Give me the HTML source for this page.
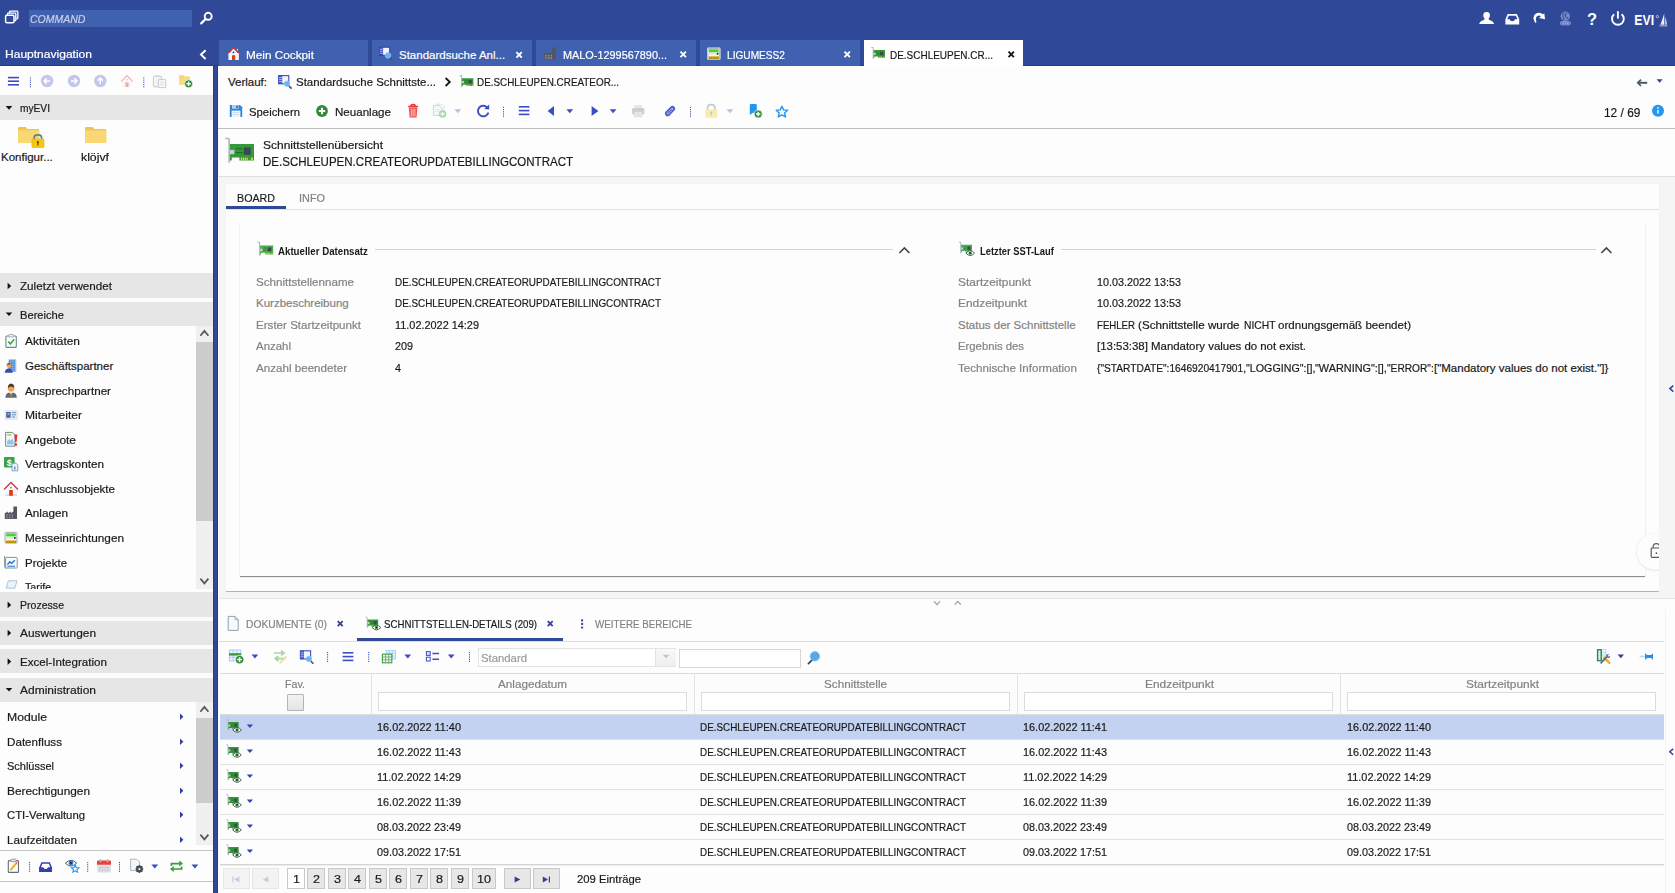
<!DOCTYPE html><html><head><meta charset="utf-8"><title>EVI</title><style>
html,body{margin:0;padding:0}body{width:1675px;height:893px;position:relative;overflow:hidden;background:#fff;font-family:"Liberation Sans",sans-serif;font-size:12px;color:#1a1a1a}
body>div,body>svg,body>span{position:absolute;display:block}body>span{white-space:nowrap;line-height:16px;height:16px;transform-origin:0 50%;-webkit-text-stroke:0.2px}
</style></head><body>
<div style="left:0px;top:0px;width:1675px;height:66px;background:#2f4898;"></div>
<div style="left:0px;top:65px;width:1675px;height:1px;background:#223c94;"></div>
<div style="left:29px;top:10px;width:163px;height:17px;background:#4060b0;"></div>
<span id="t0" style="left:30.3px;top:11px;font-size:11.5px;color:#c9d1ec;font-style:italic;transform:scaleX(0.9126);">COMMAND</span>
<span id="t1" style="left:5px;top:46px;font-size:11.5px;color:#ffffff;transform:scaleX(1.0466);">Hauptnavigation</span>
<div style="left:219px;top:40px;width:149px;height:26px;background:#4060b0;"></div>
<span id="t2" style="left:246px;top:47px;font-size:11.5px;color:#ffffff;transform:scaleX(1.0230);">Mein Cockpit</span>
<div style="left:372px;top:40px;width:160px;height:26px;background:#4060b0;"></div>
<span id="t3" style="left:399px;top:47px;font-size:11.5px;color:#ffffff;">Standardsuche Anl...</span>
<div style="left:536px;top:40px;width:160px;height:26px;background:#4060b0;"></div>
<span id="t4" style="left:563px;top:47px;font-size:11.5px;color:#ffffff;transform:scaleX(0.9457);">MALO-1299567890...</span>
<div style="left:700px;top:40px;width:160px;height:26px;background:#4060b0;"></div>
<span id="t5" style="left:727px;top:47px;font-size:11.5px;color:#ffffff;transform:scaleX(0.8811);">LIGUMESS2</span>
<div style="left:864px;top:40px;width:159px;height:26px;background:#ffffff;"></div>
<span id="t6" style="left:890px;top:47px;font-size:11.5px;color:#1a1a1a;transform:scaleX(0.8666);">DE.SCHLEUPEN.CR...</span>
<div style="left:0px;top:66px;width:213px;height:827px;background:#fdfdfd;"></div>
<div style="left:218px;top:66px;width:1457px;height:111px;background:#fdfdfd;"></div>
<div style="left:213px;top:66px;width:5px;height:827px;background:#2f4898;"></div>
<div style="left:213px;top:66px;width:1px;height:827px;background:#223c94;"></div>
<div style="left:217px;top:66px;width:1px;height:827px;background:#223c94;"></div>
<div style="left:0px;top:95px;width:213px;height:25px;background:#e6e6e6;"></div>
<span id="t7" style="left:20px;top:100px;font-size:11.5px;color:#1a1a1a;transform:scaleX(0.8856);">myEVI</span>
<span id="t8" style="left:1px;top:149px;font-size:11.5px;color:#1a1a1a;">Konfigur...</span>
<span id="t9" style="left:81px;top:149px;font-size:11.5px;color:#1a1a1a;transform:scaleX(1.0686);">klöjvf</span>
<div style="left:0px;top:273px;width:213px;height:25px;background:#e6e6e6;"></div>
<span id="t10" style="left:20px;top:278px;font-size:11.5px;color:#1a1a1a;transform:scaleX(1.0136);">Zuletzt verwendet</span>
<div style="left:0px;top:298px;width:213px;height:4px;background:#fbfbfb;"></div>
<div style="left:0px;top:302px;width:213px;height:24px;background:#e6e6e6;"></div>
<span id="t11" style="left:20px;top:307px;font-size:11.5px;color:#1a1a1a;transform:scaleX(0.9694);">Bereiche</span>
<div style="left:196px;top:326px;width:17px;height:263px;background:#f0f0f0;"></div>
<div style="left:196px;top:342px;width:17px;height:179px;background:#cccccc;"></div>
<span id="t12" style="left:25px;top:333px;font-size:11.5px;color:#1a1a1a;transform:scaleX(1.0365);">Aktivitäten</span>
<span id="t13" style="left:25px;top:358px;font-size:11.5px;color:#1a1a1a;">Geschäftspartner</span>
<span id="t14" style="left:25px;top:383px;font-size:11.5px;color:#1a1a1a;transform:scaleX(1.0114);">Ansprechpartner</span>
<span id="t15" style="left:25px;top:407px;font-size:11.5px;color:#1a1a1a;transform:scaleX(1.0492);">Mitarbeiter</span>
<span id="t16" style="left:25px;top:432px;font-size:11.5px;color:#1a1a1a;transform:scaleX(1.0355);">Angebote</span>
<span id="t17" style="left:25px;top:456px;font-size:11.5px;color:#1a1a1a;transform:scaleX(1.0212);">Vertragskonten</span>
<span id="t18" style="left:25px;top:481px;font-size:11.5px;color:#1a1a1a;transform:scaleX(1.0056);">Anschlussobjekte</span>
<span id="t19" style="left:25px;top:505px;font-size:11.5px;color:#1a1a1a;transform:scaleX(1.0185);">Anlagen</span>
<span id="t20" style="left:25px;top:530px;font-size:11.5px;color:#1a1a1a;transform:scaleX(1.0256);">Messeinrichtungen</span>
<span id="t21" style="left:25px;top:555px;font-size:11.5px;color:#1a1a1a;transform:scaleX(0.9956);">Projekte</span>
<span id="t22" style="left:25.3px;top:579px;font-size:11.5px;color:#1a1a1a;transform:scaleX(0.9316);">Tarife</span>
<div style="left:0px;top:588.5px;width:196px;height:3.5px;background:#fdfdfd;"></div>
<div style="left:0px;top:592px;width:213px;height:25px;background:#e6e6e6;"></div>
<span id="t23" style="left:20px;top:597px;font-size:11.5px;color:#1a1a1a;transform:scaleX(0.9179);">Prozesse</span>
<div style="left:0px;top:621px;width:213px;height:24px;background:#e6e6e6;"></div>
<span id="t24" style="left:20px;top:625px;font-size:11.5px;color:#1a1a1a;transform:scaleX(1.0336);">Auswertungen</span>
<div style="left:0px;top:649px;width:213px;height:24px;background:#e6e6e6;"></div>
<span id="t25" style="left:20px;top:654px;font-size:11.5px;color:#1a1a1a;transform:scaleX(1.0081);">Excel-Integration</span>
<div style="left:0px;top:678px;width:213px;height:24px;background:#e6e6e6;"></div>
<span id="t26" style="left:20px;top:682px;font-size:11.5px;color:#1a1a1a;transform:scaleX(1.0429);">Administration</span>
<div style="left:0px;top:617px;width:213px;height:4px;background:#fbfbfb;"></div>
<div style="left:0px;top:645px;width:213px;height:4px;background:#fbfbfb;"></div>
<div style="left:0px;top:673px;width:213px;height:4px;background:#fbfbfb;"></div>
<div style="left:196px;top:702px;width:17px;height:143px;background:#f0f0f0;"></div>
<div style="left:196px;top:718px;width:17px;height:85px;background:#cccccc;"></div>
<span id="t27" style="left:7px;top:709px;font-size:11.5px;color:#1a1a1a;transform:scaleX(1.0605);">Module</span>
<span id="t28" style="left:7px;top:734px;font-size:11.5px;color:#1a1a1a;transform:scaleX(1.0121);">Datenfluss</span>
<span id="t29" style="left:7px;top:758px;font-size:11.5px;color:#1a1a1a;transform:scaleX(0.9549);">Schlüssel</span>
<span id="t30" style="left:7px;top:783px;font-size:11.5px;color:#1a1a1a;transform:scaleX(1.0303);">Berechtigungen</span>
<span id="t31" style="left:7px;top:807px;font-size:11.5px;color:#1a1a1a;transform:scaleX(0.9840);">CTI-Verwaltung</span>
<span id="t32" style="left:7px;top:832px;font-size:11.5px;color:#1a1a1a;transform:scaleX(1.0136);">Laufzeitdaten</span>
<div style="left:0px;top:850px;width:213px;height:1px;background:#c6c6c6;"></div>
<div style="left:0px;top:881px;width:213px;height:1px;background:#c6c6c6;"></div>
<span id="t33" style="left:228px;top:74px;font-size:11.5px;color:#1a1a1a;">Verlauf:</span>
<span id="t34" style="left:296px;top:74px;font-size:11.5px;color:#1a1a1a;transform:scaleX(0.9954);">Standardsuche Schnittste...</span>
<span id="t35" style="left:477px;top:74px;font-size:11.5px;color:#1a1a1a;transform:scaleX(0.8591);">DE.SCHLEUPEN.CREATEOR...</span>
<span id="t36" style="left:249px;top:104px;font-size:11.5px;color:#1a1a1a;transform:scaleX(0.9846);">Speichern</span>
<span id="t37" style="left:335px;top:104px;font-size:11.5px;color:#1a1a1a;transform:scaleX(1.0065);">Neuanlage</span>
<span id="t38" style="left:1603.6px;top:105.4px;font-size:12.5px;color:#1a1a1a;transform:scaleX(0.9520);">12 / 69</span>
<div style="left:218px;top:128px;width:1457px;height:1px;background:#bdbdbd;"></div>
<span id="t39" style="left:263px;top:137px;font-size:11.5px;color:#1a1a1a;transform:scaleX(1.0429);">Schnittstellenübersicht</span>
<span id="t40" style="left:263px;top:153.6px;font-size:12.5px;color:#1a1a1a;transform:scaleX(0.9215);">DE.SCHLEUPEN.CREATEORUPDATEBILLINGCONTRACT</span>
<div style="left:218px;top:176px;width:1457px;height:1px;background:#e0e0e0;"></div>
<div style="left:219px;top:177px;width:1456px;height:422px;background:#f5f5f5;"></div>
<div style="left:226px;top:184px;width:1433px;height:407px;background:#fdfdfd;"></div>
<div style="left:226px;top:591px;width:1433px;height:1px;background:#b4b4b4;"></div>
<span id="t41" style="left:237px;top:190px;font-size:11.5px;color:#1a1a1a;transform:scaleX(0.9290);">BOARD</span>
<span id="t42" style="left:299px;top:190px;font-size:11.5px;color:#848282;transform:scaleX(0.9460);">INFO</span>
<div style="left:226px;top:206px;width:60px;height:3px;background:#2f4898;"></div>
<div style="left:226px;top:209px;width:1433px;height:1px;background:#e2e2e2;"></div>
<div style="left:239px;top:224px;width:1407px;height:353px;background:#f1f1f1;"></div>
<div style="left:240px;top:224px;width:1405px;height:352px;background:#fdfdfd;"></div>
<div style="left:240px;top:576px;width:1405px;height:1px;background:#8e8e8e;"></div>
<div style="left:240px;top:577px;width:1405px;height:1px;background:#eeeeee;"></div>
<span id="t43" style="left:278.2px;top:243.6px;font-size:10.2px;color:#1a1a1a;font-weight:700;-webkit-text-stroke:0;transform:scaleX(0.9507);">Aktueller Datensatz</span>
<div style="left:375px;top:249px;width:518px;height:1px;background:#d4d4d4;"></div>
<span id="t44" style="left:980.1px;top:243.6px;font-size:10.2px;color:#1a1a1a;font-weight:700;-webkit-text-stroke:0;transform:scaleX(0.9193);">Letzter SST-Lauf</span>
<div style="left:1061px;top:249px;width:535px;height:1px;background:#d4d4d4;"></div>
<span id="t45" style="left:256px;top:274px;font-size:11.5px;color:#848282;transform:scaleX(1.0085);">Schnittstellenname</span>
<span id="t46" style="left:395px;top:274px;font-size:11.5px;color:#1a1a1a;transform:scaleX(0.8595);">DE.SCHLEUPEN.CREATEORUPDATEBILLINGCONTRACT</span>
<span id="t47" style="left:256px;top:295px;font-size:11.5px;color:#848282;">Kurzbeschreibung</span>
<span id="t48" style="left:395px;top:295px;font-size:11.5px;color:#1a1a1a;transform:scaleX(0.8595);">DE.SCHLEUPEN.CREATEORUPDATEBILLINGCONTRACT</span>
<span id="t49" style="left:256px;top:317px;font-size:11.5px;color:#848282;transform:scaleX(1.0078);">Erster Startzeitpunkt</span>
<span id="t50" style="left:395px;top:317px;font-size:11.5px;color:#1a1a1a;transform:scaleX(0.9471);">11.02.2022 14:29</span>
<span id="t51" style="left:256px;top:338px;font-size:11.5px;color:#848282;transform:scaleX(0.9951);">Anzahl</span>
<span id="t52" style="left:395px;top:338px;font-size:11.5px;color:#1a1a1a;transform:scaleX(0.9381);">209</span>
<span id="t53" style="left:256px;top:360px;font-size:11.5px;color:#848282;transform:scaleX(1.0094);">Anzahl beendeter</span>
<span id="t54" style="left:395px;top:360px;font-size:11.5px;color:#1a1a1a;transform:scaleX(0.9366);">4</span>
<span id="t55" style="left:958px;top:274px;font-size:11.5px;color:#848282;transform:scaleX(1.0380);">Startzeitpunkt</span>
<span id="t56" style="left:1097px;top:274px;font-size:11.5px;color:#1a1a1a;transform:scaleX(0.9382);">10.03.2022 13:53</span>
<span id="t57" style="left:958px;top:295px;font-size:11.5px;color:#848282;transform:scaleX(1.0376);">Endzeitpunkt</span>
<span id="t58" style="left:1097px;top:295px;font-size:11.5px;color:#1a1a1a;transform:scaleX(0.9382);">10.03.2022 13:53</span>
<span id="t59" style="left:958px;top:317px;font-size:11.5px;color:#848282;">Status der Schnittstelle</span>
<span id="t60" style="left:1097px;top:317px;font-size:11.5px;color:#1a1a1a;transform:scaleX(0.8375);">FEHLER</span>
<span id="t61" style="left:1138.4px;top:317px;font-size:11.5px;color:#1a1a1a;transform:scaleX(1.0124);">(Schnittstelle wurde</span>
<span id="t62" style="left:1243.5px;top:317px;font-size:11.5px;color:#1a1a1a;transform:scaleX(0.8964);">NICHT</span>
<span id="t63" style="left:1278px;top:317px;font-size:11.5px;color:#1a1a1a;transform:scaleX(1.0050);">ordnungsgemäß beendet)</span>
<span id="t64" style="left:958px;top:338px;font-size:11.5px;color:#848282;transform:scaleX(0.9832);">Ergebnis des</span>
<span id="t65" style="left:1097px;top:338px;font-size:11.5px;color:#1a1a1a;transform:scaleX(0.9937);">[13:53:38] Mandatory values do not exist.</span>
<span id="t66" style="left:958px;top:360px;font-size:11.5px;color:#848282;transform:scaleX(1.0062);">Technische Information</span>
<span id="t67" style="left:1097px;top:360px;font-size:11.5px;color:#1a1a1a;transform:scaleX(0.8869);">{&quot;STARTDATE&quot;:1646920417901,</span>
<span id="t68" style="left:1246px;top:360px;font-size:11.5px;color:#1a1a1a;transform:scaleX(0.9300);">&quot;LOGGING&quot;:[],</span>
<span id="t69" style="left:1315.4px;top:360px;font-size:11.5px;color:#1a1a1a;transform:scaleX(0.9447);">&quot;WARNING&quot;:[],</span>
<span id="t70" style="left:1387.3px;top:360px;font-size:11.5px;color:#1a1a1a;transform:scaleX(0.8830);">&quot;ERROR&quot;:</span>
<span id="t71" style="left:1434px;top:360px;font-size:11.5px;color:#1a1a1a;">[&quot;Mandatory values do not exist.&quot;]}</span>
<div style="left:219px;top:598px;width:1456px;height:1px;background:#e6e6e6;"></div>
<div style="left:218px;top:599px;width:1457px;height:294px;background:#fdfdfd;"></div>
<div style="left:1665px;top:609px;width:1px;height:284px;background:#f3f3f3;"></div>
<span id="t72" style="left:246px;top:616px;font-size:11.5px;color:#848282;transform:scaleX(0.8927);">DOKUMENTE (0)</span>
<span id="t73" style="left:384px;top:616px;font-size:11.5px;color:#1a1a1a;transform:scaleX(0.8410);">SCHNITTSTELLEN-DETAILS (209)</span>
<span id="t74" style="left:595px;top:616px;font-size:11.5px;color:#848282;transform:scaleX(0.8480);">WEITERE BEREICHE</span>
<div style="left:219px;top:641px;width:1445px;height:1px;background:#dcdcdc;"></div>
<div style="left:357px;top:638px;width:206px;height:3px;background:#2f4898;"></div>
<div style="left:478px;top:648px;width:198px;height:19px;background:#ffffff;box-shadow:inset 0 0 0 1px #e3e3e3"></div>
<div style="left:655px;top:649px;width:20px;height:17px;background:linear-gradient(#f8f8f8,#eeeeee);border-left:1px solid #e3e3e3"></div>
<span id="t75" style="left:481px;top:650px;font-size:11.5px;color:#9a9a9a;transform:scaleX(0.9853);">Standard</span>
<div style="left:679px;top:649px;width:122px;height:19px;background:#ffffff;box-shadow:inset 0 0 0 1px #d6d6d6"></div>
<div style="left:220px;top:673px;width:1444px;height:1px;background:#dcdcdc;"></div>
<div style="left:220px;top:674px;width:1444px;height:40px;background:#fcfcfc;"></div>
<span id="t76" style="left:285px;top:676px;font-size:11.5px;color:#848282;transform:scaleX(0.9296);">Fav.</span>
<div style="left:287px;top:694px;width:17px;height:17px;background:linear-gradient(#f4f4f4,#e2e2e2);box-shadow:inset 0 0 0 1px #b4b4b4;border-radius:1.5px"></div>
<div style="left:371px;top:673px;width:1px;height:41px;background:#e2e2e2;"></div>
<span id="t77" style="left:498px;top:676px;font-size:11.5px;color:#848282;transform:scaleX(1.0180);">Anlagedatum</span>
<div style="left:378px;top:692px;width:309px;height:19px;background:#ffffff;box-shadow:inset 0 0 0 1px #dcdcdc"></div>
<div style="left:694px;top:673px;width:1px;height:41px;background:#e2e2e2;"></div>
<span id="t78" style="left:824px;top:676px;font-size:11.5px;color:#848282;transform:scaleX(1.0159);">Schnittstelle</span>
<div style="left:701px;top:692px;width:309px;height:19px;background:#ffffff;box-shadow:inset 0 0 0 1px #dcdcdc"></div>
<div style="left:1017px;top:673px;width:1px;height:41px;background:#e2e2e2;"></div>
<span id="t79" style="left:1145px;top:676px;font-size:11.5px;color:#848282;transform:scaleX(1.0376);">Endzeitpunkt</span>
<div style="left:1024px;top:692px;width:309px;height:19px;background:#ffffff;box-shadow:inset 0 0 0 1px #dcdcdc"></div>
<div style="left:1340px;top:673px;width:1px;height:41px;background:#e2e2e2;"></div>
<span id="t80" style="left:1466px;top:676px;font-size:11.5px;color:#848282;transform:scaleX(1.0380);">Startzeitpunkt</span>
<div style="left:1347px;top:692px;width:309px;height:19px;background:#ffffff;box-shadow:inset 0 0 0 1px #dcdcdc"></div>
<div style="left:220px;top:714px;width:1444px;height:1px;background:#dcdcdc;"></div>
<div style="left:220px;top:715px;width:1444px;height:25px;background:#c2d2f0;"></div>
<span id="t81" style="left:377px;top:719px;font-size:11.5px;color:#1a1a1a;transform:scaleX(0.9471);">16.02.2022 11:40</span>
<span id="t82" style="left:700px;top:719px;font-size:11.5px;color:#1a1a1a;transform:scaleX(0.8595);">DE.SCHLEUPEN.CREATEORUPDATEBILLINGCONTRACT</span>
<span id="t83" style="left:1023px;top:719px;font-size:11.5px;color:#1a1a1a;transform:scaleX(0.9471);">16.02.2022 11:41</span>
<span id="t84" style="left:1347px;top:719px;font-size:11.5px;color:#1a1a1a;transform:scaleX(0.9471);">16.02.2022 11:40</span>
<div style="left:220px;top:739px;width:1444px;height:1px;background:#e2e2e2;"></div>
<span id="t85" style="left:377px;top:744px;font-size:11.5px;color:#1a1a1a;transform:scaleX(0.9471);">16.02.2022 11:43</span>
<span id="t86" style="left:700px;top:744px;font-size:11.5px;color:#1a1a1a;transform:scaleX(0.8595);">DE.SCHLEUPEN.CREATEORUPDATEBILLINGCONTRACT</span>
<span id="t87" style="left:1023px;top:744px;font-size:11.5px;color:#1a1a1a;transform:scaleX(0.9471);">16.02.2022 11:43</span>
<span id="t88" style="left:1347px;top:744px;font-size:11.5px;color:#1a1a1a;transform:scaleX(0.9471);">16.02.2022 11:43</span>
<div style="left:220px;top:764px;width:1444px;height:1px;background:#e2e2e2;"></div>
<span id="t89" style="left:377px;top:769px;font-size:11.5px;color:#1a1a1a;transform:scaleX(0.9471);">11.02.2022 14:29</span>
<span id="t90" style="left:700px;top:769px;font-size:11.5px;color:#1a1a1a;transform:scaleX(0.8595);">DE.SCHLEUPEN.CREATEORUPDATEBILLINGCONTRACT</span>
<span id="t91" style="left:1023px;top:769px;font-size:11.5px;color:#1a1a1a;transform:scaleX(0.9471);">11.02.2022 14:29</span>
<span id="t92" style="left:1347px;top:769px;font-size:11.5px;color:#1a1a1a;transform:scaleX(0.9471);">11.02.2022 14:29</span>
<div style="left:220px;top:789px;width:1444px;height:1px;background:#e2e2e2;"></div>
<span id="t93" style="left:377px;top:794px;font-size:11.5px;color:#1a1a1a;transform:scaleX(0.9471);">16.02.2022 11:39</span>
<span id="t94" style="left:700px;top:794px;font-size:11.5px;color:#1a1a1a;transform:scaleX(0.8595);">DE.SCHLEUPEN.CREATEORUPDATEBILLINGCONTRACT</span>
<span id="t95" style="left:1023px;top:794px;font-size:11.5px;color:#1a1a1a;transform:scaleX(0.9471);">16.02.2022 11:39</span>
<span id="t96" style="left:1347px;top:794px;font-size:11.5px;color:#1a1a1a;transform:scaleX(0.9471);">16.02.2022 11:39</span>
<div style="left:220px;top:814px;width:1444px;height:1px;background:#e2e2e2;"></div>
<span id="t97" style="left:377px;top:819px;font-size:11.5px;color:#1a1a1a;transform:scaleX(0.9382);">08.03.2022 23:49</span>
<span id="t98" style="left:700px;top:819px;font-size:11.5px;color:#1a1a1a;transform:scaleX(0.8595);">DE.SCHLEUPEN.CREATEORUPDATEBILLINGCONTRACT</span>
<span id="t99" style="left:1023px;top:819px;font-size:11.5px;color:#1a1a1a;transform:scaleX(0.9382);">08.03.2022 23:49</span>
<span id="t100" style="left:1347px;top:819px;font-size:11.5px;color:#1a1a1a;transform:scaleX(0.9382);">08.03.2022 23:49</span>
<div style="left:220px;top:839px;width:1444px;height:1px;background:#e2e2e2;"></div>
<span id="t101" style="left:377px;top:844px;font-size:11.5px;color:#1a1a1a;transform:scaleX(0.9382);">09.03.2022 17:51</span>
<span id="t102" style="left:700px;top:844px;font-size:11.5px;color:#1a1a1a;transform:scaleX(0.8595);">DE.SCHLEUPEN.CREATEORUPDATEBILLINGCONTRACT</span>
<span id="t103" style="left:1023px;top:844px;font-size:11.5px;color:#1a1a1a;transform:scaleX(0.9382);">09.03.2022 17:51</span>
<span id="t104" style="left:1347px;top:844px;font-size:11.5px;color:#1a1a1a;transform:scaleX(0.9382);">09.03.2022 17:51</span>
<div style="left:220px;top:864px;width:1444px;height:1px;background:#d4d4d4;"></div>
<div style="left:220px;top:865px;width:1444px;height:1px;background:#ececec;"></div>
<div style="left:223px;top:868px;width:27px;height:21px;background:#f3f3f3;box-shadow:inset 0 0 0 1px #e6e6e6"></div>
<div style="left:252px;top:868px;width:27px;height:21px;background:#f3f3f3;box-shadow:inset 0 0 0 1px #e6e6e6"></div>
<div style="left:287px;top:868px;width:18px;height:21px;background:#ffffff;box-shadow:inset 0 0 0 1px #c9c9c9"></div>
<span id="t105" style="left:292.5px;top:871px;font-size:11.5px;color:#1a1a1a;transform:scaleX(1.0927);">1</span>
<div style="left:307.4px;top:868px;width:18px;height:21px;background:#e7e7e7;box-shadow:inset 0 0 0 1px #c9c9c9"></div>
<span id="t106" style="left:312.9px;top:871px;font-size:11.5px;color:#1a1a1a;transform:scaleX(1.0927);">2</span>
<div style="left:328px;top:868px;width:18px;height:21px;background:#e7e7e7;box-shadow:inset 0 0 0 1px #c9c9c9"></div>
<span id="t107" style="left:333.5px;top:871px;font-size:11.5px;color:#1a1a1a;transform:scaleX(1.0927);">3</span>
<div style="left:348.4px;top:868px;width:18px;height:21px;background:#e7e7e7;box-shadow:inset 0 0 0 1px #c9c9c9"></div>
<span id="t108" style="left:353.9px;top:871px;font-size:11.5px;color:#1a1a1a;transform:scaleX(1.0927);">4</span>
<div style="left:369px;top:868px;width:18px;height:21px;background:#e7e7e7;box-shadow:inset 0 0 0 1px #c9c9c9"></div>
<span id="t109" style="left:374.5px;top:871px;font-size:11.5px;color:#1a1a1a;transform:scaleX(1.0927);">5</span>
<div style="left:389.2px;top:868px;width:18px;height:21px;background:#e7e7e7;box-shadow:inset 0 0 0 1px #c9c9c9"></div>
<span id="t110" style="left:394.7px;top:871px;font-size:11.5px;color:#1a1a1a;transform:scaleX(1.0927);">6</span>
<div style="left:410px;top:868px;width:18px;height:21px;background:#e7e7e7;box-shadow:inset 0 0 0 1px #c9c9c9"></div>
<span id="t111" style="left:415.5px;top:871px;font-size:11.5px;color:#1a1a1a;transform:scaleX(1.0927);">7</span>
<div style="left:430.4px;top:868px;width:18px;height:21px;background:#e7e7e7;box-shadow:inset 0 0 0 1px #c9c9c9"></div>
<span id="t112" style="left:435.9px;top:871px;font-size:11.5px;color:#1a1a1a;transform:scaleX(1.0927);">8</span>
<div style="left:451px;top:868px;width:18px;height:21px;background:#e7e7e7;box-shadow:inset 0 0 0 1px #c9c9c9"></div>
<span id="t113" style="left:456.5px;top:871px;font-size:11.5px;color:#1a1a1a;transform:scaleX(1.0927);">9</span>
<div style="left:472px;top:868px;width:24px;height:21px;background:#e7e7e7;box-shadow:inset 0 0 0 1px #c9c9c9"></div>
<span id="t114" style="left:477.0px;top:871px;font-size:11.5px;color:#1a1a1a;transform:scaleX(1.0940);">10</span>
<div style="left:504px;top:868px;width:27px;height:21px;background:#e7e7e7;box-shadow:inset 0 0 0 1px #c9c9c9"></div>
<div style="left:533px;top:868px;width:27px;height:21px;background:#e7e7e7;box-shadow:inset 0 0 0 1px #c9c9c9"></div>
<span id="t115" style="left:577px;top:871px;font-size:11.5px;color:#1a1a1a;transform:scaleX(0.9813);">209 Einträge</span>
<svg style="left:0;top:0" width="1675" height="893" viewBox="0 0 1675 893">
<path d="M9.5,13.2 V12 Q9.5,11.2 10.3,11.2 H17 Q17.8,11.2 17.8,12 V18 Q17.8,18.8 17,18.8 H16.2" fill="none" stroke="#ffffff" stroke-width="1.3"/>
<path d="M7.5,15.2 V14 Q7.5,13.2 8.3,13.2 H15 Q15.8,13.2 15.8,14 V20 Q15.8,20.8 15,20.8 H14.2" fill="none" stroke="#ffffff" stroke-width="1.3"/>
<rect x="5.6" y="15.3" width="8.4" height="7.4" fill="#2f4898" rx="1.2" stroke="#ffffff" stroke-width="1.5"/>
<circle cx="208.2" cy="16.3" r="3.5" fill="none" stroke="#ffffff" stroke-width="1.9"/>
<path d="M205.6,19 L201.2,23.4" fill="none" stroke="#ffffff" stroke-width="2.2" stroke-linecap="round"/>
<circle cx="1486.6" cy="15.4" r="3.3" fill="#ffffff"/>
<path d="M1479.2,23.9 Q1479.6,21.3 1483.4,20.3 Q1484.8,19.8 1484.6,18 H1488.6 Q1488.4,19.8 1489.8,20.3 Q1493.6,21.3 1494,23.9 Z" fill="#ffffff"/>
<path d="M1505.4,19.3 L1507.7,14.1 H1516.9 L1519.2,19.3 V24.4 H1505.4 Z M1507.2,19.3 H1509.6 Q1510,21.2 1512.3,21.2 Q1514.6,21.2 1515,19.3 H1517.4 L1515.9,15.7 H1508.7 Z" fill="#ffffff" fill-rule="evenodd"/>
<path d="M1535.3,23 Q1531.4,17 1536,13.6 Q1539.8,11.2 1543.4,14.8 L1541.5,16.9 Q1539.4,14.6 1537.3,16 Q1534.9,17.8 1536.5,22.3 Z" fill="#ffffff"/>
<path d="M1539,17.9 L1545,19.2 L1544.3,13.2 Z" fill="#ffffff"/>
<circle cx="1565.3" cy="16.2" r="4.7" fill="#7686c6"/>
<path d="M1563.6,12.4 Q1562,14.6 1563.2,16.6 Q1564.4,18.4 1563.4,20.2 M1566.6,12.2 L1565,15.4 L1566.4,17.4" fill="none" stroke="#3f56a2" stroke-width="1.2"/>
<circle cx="1567.4" cy="18.2" r="0.9" fill="#3f56a2"/>
<rect x="1560.3" y="21.5" width="10.2" height="3.4" fill="#6273b9" rx="1.7" stroke="#8a98d0" stroke-width="0.9"/>
<path d="M1562.4,23.2 H1568.6" fill="none" stroke="#aab4de" stroke-width="1.2" stroke-dasharray="1.6 0.7"/>
<text x="1592" y="24.6" text-anchor="middle" font-family="Liberation Sans" font-weight="700" font-size="16.5" fill="#fff">?</text>
<path d="M1614.2,14.2 A5.9,5.9 0 1 0 1621.6,14.2" fill="none" stroke="#ffffff" stroke-width="1.9"/>
<path d="M1617.9,11.2 V18.6" fill="none" stroke="#ffffff" stroke-width="1.9"/>
<text x="1634.3" y="25" font-family="Liberation Sans" font-weight="700" font-size="14" fill="#fff" textLength="19.8" lengthAdjust="spacingAndGlyphs">EVI</text>
<circle cx="1657.4" cy="16.6" r="1.1" fill="none" stroke="#d8def2" stroke-width="0.8"/>
<path d="M1664.2,13.6 Q1662.2,20 1660.4,24.8 H1664.4 Z" fill="#e8ecf8"/>
<path d="M1665.2,16.5 Q1666.8,21 1667,24.8 H1665.2 Z" fill="#c9d1ee"/>
<path d="M1659.4,25.9 H1667.4" fill="none" stroke="#c9d1ee" stroke-width="0.9"/>
<path d="M205.6,50.2 L201,54.6 L205.6,59" fill="none" stroke="#ffffff" stroke-width="2"/>
<path d="M228.4,53 H238.9 V60 H228.4 Z" fill="#f4f4fb"/>
<path d="M229.2,53.4 L233.5,48.6 L237.8,53.4 Z" fill="#f4f4fb"/>
<rect x="236.7" y="49" width="1.3" height="2.6" fill="#f4f4fb"/>
<path d="M227.5,53.2 L233.5,47.3 L239.5,53.2" fill="none" stroke="#c23b30" stroke-width="1.3"/>
<rect x="232" y="55.2" width="3.2" height="4.8" fill="#e03a10"/>
<circle cx="233.5" cy="52.4" r="0.9" fill="#23318a"/>
<rect x="379.5" y="47.2" width="10.2" height="8.2" fill="#f1f2fb" stroke="#3442b6" stroke-width="1.1"/>
<rect x="379.5" y="47.2" width="3.6" height="8.2" fill="#3442b6"/>
<path d="M379.79999999999995,49.2 H382.9" fill="none" stroke="#d5d9f5" stroke-width="0.8"/>
<path d="M379.79999999999995,51.2 H382.9" fill="none" stroke="#d5d9f5" stroke-width="0.8"/>
<path d="M379.79999999999995,53.2 H382.9" fill="none" stroke="#d5d9f5" stroke-width="0.8"/>
<path d="M389.5,57.2 L392.5,60.2" fill="none" stroke="#46505a" stroke-width="1.5"/>
<circle cx="388.0" cy="55.400000000000006" r="2.8" fill="#64b5f6" stroke="#90caf9" stroke-width="0.6"/>
<path d="M543.8,59.8 V53.9 L546.8,52.099999999999994 V53.9 L549.8,52.099999999999994 V53.9 L552.4,52.3 V47.3 H556.0 V59.8 Z" fill="#55555f"/>
<rect x="545.1999999999999" y="54.9" width="1.5" height="1.6" fill="#8f8fa8"/>
<rect x="545.1999999999999" y="57.3" width="1.5" height="1.6" fill="#8f8fa8"/>
<rect x="547.9" y="54.9" width="1.5" height="1.6" fill="#8f8fa8"/>
<rect x="547.9" y="57.3" width="1.5" height="1.6" fill="#8f8fa8"/>
<rect x="550.5999999999999" y="54.9" width="1.5" height="1.6" fill="#8f8fa8"/>
<rect x="550.5999999999999" y="57.3" width="1.5" height="1.6" fill="#8f8fa8"/>
<rect x="707" y="47.5" width="13.6" height="12.3" fill="#e9ebee" rx="1.4"/>
<rect x="707.9" y="48.4" width="11.8" height="10.5" fill="#f6f7f8" rx="1" stroke="#8c969c" stroke-width="0.7"/>
<rect x="709" y="49.3" width="9.6" height="3" fill="#43d32e"/>
<rect x="709" y="52.9" width="7" height="1.6" fill="#ffd3dc"/>
<circle cx="717.6" cy="53.8" r="1" fill="#222"/>
<rect x="708.6" y="56.3" width="10.4" height="2.6" fill="#d9b51c"/>
<rect x="709.4" y="56.8" width="0.9" height="2.1" fill="#8a7410"/>
<rect x="711.4" y="56.8" width="0.9" height="2.1" fill="#8a7410"/>
<rect x="713.4" y="56.8" width="0.9" height="2.1" fill="#8a7410"/>
<rect x="715.4" y="56.8" width="0.9" height="2.1" fill="#8a7410"/>
<rect x="717.4" y="56.8" width="0.9" height="2.1" fill="#8a7410"/>
<g transform="translate(871.2 47.2) scale(0.475)">
<path d="M0.2,0.5 H3.2 Q4.2,0.5 4.2,1.6 V24.8" fill="none" stroke="#aebac6" stroke-width="2.2"/>
<path d="M4.9,5.9 H29 V22.4 H14.4 V19.5 H6.8 V22.4 H4.9 Z" fill="#35993a"/>
<rect x="18.7" y="9.5" width="7" height="7.4" fill="#3b4a52"/>
<rect x="5" y="11.9" width="4.4" height="4.3" fill="#c9ced8"/>
<rect x="15.9" y="19.6" width="1.2" height="2.8" fill="#f2d338"/>
<rect x="17.8" y="19.6" width="1.2" height="2.8" fill="#f2d338"/>
<rect x="19.7" y="19.6" width="1.2" height="2.8" fill="#f2d338"/>
<rect x="21.6" y="19.6" width="1.2" height="2.8" fill="#f2d338"/>
<rect x="26.1" y="19.6" width="1.7" height="2.8" fill="#f2d338"/>
<path d="M11,10.6 H17 M10.5,14.6 H17.5" fill="none" stroke="#1f6f25" stroke-width="1.3"/>
</g>
<path d="M516.4,52.199999999999996 L521.8000000000001,57.6 M521.8000000000001,52.199999999999996 L516.4,57.6" fill="none" stroke="#ffffff" stroke-width="1.9"/>
<path d="M680.5,51.699999999999996 L685.9000000000001,57.1 M685.9000000000001,51.699999999999996 L680.5,57.1" fill="none" stroke="#ffffff" stroke-width="1.9"/>
<path d="M844.5,51.699999999999996 L849.9000000000001,57.1 M849.9000000000001,51.699999999999996 L844.5,57.1" fill="none" stroke="#ffffff" stroke-width="1.9"/>
<path d="M1008.5,51.699999999999996 L1013.9000000000001,57.1 M1013.9000000000001,51.699999999999996 L1008.5,57.1" fill="none" stroke="#16161e" stroke-width="1.9"/>
<path d="M7.9,77.6 H19" fill="none" stroke="#3d4ec2" stroke-width="1.6"/>
<path d="M7.9,81.2 H19" fill="none" stroke="#3d4ec2" stroke-width="1.6"/>
<path d="M7.9,84.8 H19" fill="none" stroke="#3d4ec2" stroke-width="1.6"/>
<path d="M30.4,77.4 V87.6" fill="none" stroke="#3d4ec2" stroke-width="1" stroke-dasharray="1.2 1"/>
<circle cx="47.1" cy="81" r="6.2" fill="#c3c7ea"/>
<path d="M50.1,81 H44.7 M46.7,78.4 L44.1,81 L46.7,83.6" fill="none" stroke="#ffffff" stroke-width="1.5"/>
<circle cx="74" cy="81" r="6.2" fill="#c3c7ea"/>
<path d="M71,81 H76.4 M74.4,78.4 L77,81 L74.4,83.6" fill="none" stroke="#ffffff" stroke-width="1.5"/>
<circle cx="100.3" cy="81" r="6.2" fill="#c3c7ea"/>
<path d="M100.3,84 V78.6 M97.7,80.6 L100.3,78 L102.89999999999999,80.6" fill="none" stroke="#ffffff" stroke-width="1.5"/>
<path d="M121.2,81.6 L127,75.6 L132.8,81.6" fill="none" stroke="#f0b4ae" stroke-width="1.2"/>
<rect x="122.6" y="81.4" width="8.8" height="5.6" fill="#f3f3f8"/>
<rect x="125.5" y="82.4" width="3" height="4.6" fill="#f2aa9a"/>
<circle cx="127" cy="79.8" r="0.8" fill="#b8bde0"/>
<path d="M143.8,77.4 V87.6" fill="none" stroke="#3d4ec2" stroke-width="1" stroke-dasharray="1.2 1"/>
<rect x="153.4" y="76.2" width="8.2" height="10.6" fill="#f2f3f5" rx="0.8" stroke="#c6ccd2" stroke-width="1"/>
<rect x="155.6" y="75" width="3.8" height="2" fill="#d5dade"/>
<rect x="158.4" y="79.6" width="7.4" height="8" fill="#f7f8f9" rx="0.5" stroke="#c6ccd2" stroke-width="1"/>
<path d="M160.2,82.4 H164 M160.2,84.4 H164" fill="none" stroke="#d4d9dd" stroke-width="0.8"/>
<path d="M179,76 Q179,75.3 179.8,75.3 H183.4 L184.6,76.6 H189.2 Q190,76.6 190,77.4 V84.6 H179 Z" fill="#f6d672"/>
<path d="M179,78.4 H190 V84.6 H179 Z" fill="#f8dc80"/>
<circle cx="188.6" cy="83.8" r="4" fill="#2e8b3a" stroke="#ffffff" stroke-width="0.7"/>
<path d="M186.4,83.8 H190.8 M188.6,81.6 V86" fill="none" stroke="#ffffff" stroke-width="1.4"/>
<path d="M5.7,106.10000000000001 H12.3 L9,109.7 Z" fill="#111"/>
<path d="M7.6000000000000005,282.7 L11.200000000000001,286 L7.6000000000000005,289.3 Z" fill="#111"/>
<path d="M5.7,312.4 H12.3 L9,316.0 Z" fill="#111"/>
<path d="M7.6000000000000005,601.6 L11.200000000000001,604.9 L7.6000000000000005,608.1999999999999 Z" fill="#111"/>
<path d="M7.6000000000000005,629.7 L11.200000000000001,633 L7.6000000000000005,636.3 Z" fill="#111"/>
<path d="M7.6000000000000005,658.3000000000001 L11.200000000000001,661.6 L7.6000000000000005,664.9 Z" fill="#111"/>
<path d="M5.7,688.0 H12.3 L9,691.5999999999999 Z" fill="#111"/>
<path d="M18,128.1 Q18,126.9 19.2,126.9 H25.6 L27.4,128.9 H38 Q39.2,128.9 39.2,130.1 V141.9 Q39.2,143.1 38,143.1 H19.2 Q18,143.1 18,141.9 Z" fill="#f0c24f"/>
<path d="M18,130.3 H39.2 V141.9 Q39.2,143.1 38,143.1 H19.2 Q18,143.1 18,141.9 Z" fill="#f9d775"/>
<path d="M85,128.1 Q85,126.9 86.2,126.9 H92.6 L94.4,128.9 H105 Q106.2,128.9 106.2,130.1 V141.9 Q106.2,143.1 105,143.1 H86.2 Q85,143.1 85,141.9 Z" fill="#f0c24f"/>
<path d="M85,130.3 H106.2 V141.9 Q106.2,143.1 105,143.1 H86.2 Q85,143.1 85,141.9 Z" fill="#f9d775"/>
<path d="M34.2,139.6 V137.4 Q34.2,134.8 37.9,134.8 Q41.6,134.8 41.6,137.4 V139.6" fill="none" stroke="#5f7f95" stroke-width="1.7"/>
<rect x="31.9" y="139" width="12.1" height="8.5" fill="#f4c811" rx="0.8" stroke="#e0b400" stroke-width="0.6"/>
<circle cx="37.9" cy="142.2" r="1.1" fill="#5a4a10"/>
<rect x="37.3" y="142.4" width="1.2" height="3" fill="#5a4a10"/>
<path d="M200.4,335.7 L204.4,330.90000000000003 L208.4,335.7" fill="none" stroke="#555" stroke-width="1.7"/>
<path d="M200.4,578.6 L204.4,583.4 L208.4,578.6" fill="none" stroke="#555" stroke-width="1.7"/>
<path d="M200.4,711.6999999999999 L204.4,706.9 L208.4,711.6999999999999" fill="none" stroke="#555" stroke-width="1.7"/>
<path d="M200.4,834.6 L204.4,839.4 L208.4,834.6" fill="none" stroke="#555" stroke-width="1.7"/>
<path d="M180.0,713.5999999999999 L183.39999999999998,716.8 L180.0,720.0 Z" fill="#2f3fa2"/>
<path d="M180.0,738.5999999999999 L183.39999999999998,741.8 L180.0,745.0 Z" fill="#2f3fa2"/>
<path d="M180.0,762.5999999999999 L183.39999999999998,765.8 L180.0,769.0 Z" fill="#2f3fa2"/>
<path d="M180.0,787.5999999999999 L183.39999999999998,790.8 L180.0,794.0 Z" fill="#2f3fa2"/>
<path d="M180.0,811.5999999999999 L183.39999999999998,814.8 L180.0,818.0 Z" fill="#2f3fa2"/>
<path d="M180.0,836.5999999999999 L183.39999999999998,839.8 L180.0,843.0 Z" fill="#2f3fa2"/>
<rect x="5.9" y="336" width="10.4" height="11.4" fill="#fbfcfc" rx="1" stroke="#6f8590" stroke-width="1.1"/>
<rect x="8.6" y="334.6" width="5" height="2.4" fill="#eef1f2" rx="0.6" stroke="#8d9da6" stroke-width="0.8"/>
<path d="M8.2,341.6 L10.3,344 L14.2,339.2" fill="none" stroke="#35a83a" stroke-width="1.5"/>
<rect x="8.6" y="359.4" width="7.4" height="12.6" fill="#7fb2e8"/>
<path d="M9.6,360.4 V370.6" fill="none" stroke="#2f74d0" stroke-width="1.1" stroke-dasharray="1.4 0.8"/>
<path d="M11.8,360.4 V370.6" fill="none" stroke="#2f74d0" stroke-width="1.1" stroke-dasharray="1.4 0.8"/>
<path d="M14,360.4 V370.6" fill="none" stroke="#2f74d0" stroke-width="1.1" stroke-dasharray="1.4 0.8"/>
<rect x="15.4" y="360" width="1" height="12" fill="#c9c9c9"/>
<circle cx="8.8" cy="365.4" r="2.4" fill="#f4a54a"/>
<path d="M6.6,364.6 Q8.8,361.6 11,364.6 Z" fill="#5a3a28"/>
<path d="M4.8,372.8 Q5,368.6 8.8,368.4 Q12.6,368.6 12.8,372.8 Z" fill="#2f4fb8"/>
<path d="M8,368.8 L8.8,371 L9.6,368.8 Z" fill="#d03030"/>
<circle cx="11.1" cy="388.6" r="3.2" fill="#f4a54a"/>
<path d="M7.8,388 Q8,384 11.1,383.6 Q14.2,384 14.4,388 Q12.6,386.2 11.1,386.4 Q9.6,386.2 7.8,388 Z" fill="#4a3424"/>
<path d="M5.4,397.8 Q5.6,393 9.4,392.6 L11.1,394.2 L12.8,392.6 Q16.6,393 16.8,397.8 Z" fill="#5f6b74"/>
<path d="M10.4,392.8 H11.8 L11.5,396.6 L11.1,397 L10.7,396.6 Z" fill="#f28b30"/>
<rect x="5.2" y="410.6" width="12" height="8.8" fill="#dfeef8" rx="0.8" stroke="#cfdde8" stroke-width="0.6"/>
<rect x="6.2" y="412" width="4.4" height="5.6" fill="#2d6fc4"/>
<circle cx="8.4" cy="414" r="1.1" fill="#f4a54a"/>
<path d="M6.8,417.4 Q8.4,415 10,417.4 Z" fill="#c7392b"/>
<path d="M11.8,412.6 H16 M11.8,414.8 H16 M11.8,417 H15" fill="none" stroke="#6a8fb8" stroke-width="1"/>
<path d="M5.6,432.4 H12.6 L15,434.8 V446.2 H5.6 Z" fill="#f4f8fb" stroke="#6f8896" stroke-width="1"/>
<rect x="7" y="434" width="4.4" height="1.6" fill="#b7d433"/>
<path d="M7,441.4 L9,439 L10.6,440.8 L12.4,438.6 L13.6,441.4 V444.4 H7 Z" fill="#8ec3ea"/>
<path d="M14.4,434.6 H17.4 L16.6,442 H15.2 Z" fill="#e53224"/>
<circle cx="15.9" cy="444.6" r="1.3" fill="#e53224"/>
<rect x="4" y="457" width="10.6" height="10.4" fill="#3aa347" rx="1"/>
<text x="9.3" y="465.6" text-anchor="middle" font-family="Liberation Sans" font-weight="700" font-size="9.5" fill="#fff">$</text>
<path d="M12,463.2 H16 L17.8,465 V470.8 H12 Z" fill="#eef5fb" stroke="#6d9bc4" stroke-width="0.9"/>
<rect x="14" y="466.6" width="1.6" height="3" fill="#6d9bc4"/>
<rect x="5.6" y="488.4" width="11" height="7.4" fill="#f3f4fb"/>
<path d="M5.2,494.2 H17 V496 H5.2 Z" fill="#d7dcf3"/>
<rect x="9.2" y="490" width="3.6" height="5.8" fill="#e03a10"/>
<path d="M4,489.6 L11,482.6 L18,489.6" fill="none" stroke="#cf3a3a" stroke-width="1.4"/>
<circle cx="11" cy="487.6" r="0.9" fill="#5f6fd0"/>
<path d="M4.8,519.1 V513.2 L7.8,511.40000000000003 V513.2 L10.8,511.40000000000003 V513.2 L13.399999999999999,511.6 V506.6 H17.0 V519.1 Z" fill="#55555f"/>
<rect x="6.199999999999999" y="514.2" width="1.5" height="1.6" fill="#8f8fa8"/>
<rect x="6.199999999999999" y="516.6" width="1.5" height="1.6" fill="#8f8fa8"/>
<rect x="8.899999999999999" y="514.2" width="1.5" height="1.6" fill="#8f8fa8"/>
<rect x="8.899999999999999" y="516.6" width="1.5" height="1.6" fill="#8f8fa8"/>
<rect x="11.6" y="514.2" width="1.5" height="1.6" fill="#8f8fa8"/>
<rect x="11.6" y="516.6" width="1.5" height="1.6" fill="#8f8fa8"/>
<rect x="4.2" y="531.6" width="13.6" height="12.3" fill="#e9ebee" rx="1.4"/>
<rect x="5.1000000000000005" y="532.5" width="11.8" height="10.5" fill="#f6f7f8" rx="1" stroke="#8c969c" stroke-width="0.7"/>
<rect x="6.2" y="533.4" width="9.6" height="3" fill="#43d32e"/>
<rect x="6.2" y="537.0" width="7" height="1.6" fill="#ffd3dc"/>
<circle cx="14.8" cy="537.9" r="1" fill="#222"/>
<rect x="5.800000000000001" y="540.4" width="10.4" height="2.6" fill="#d9b51c"/>
<rect x="6.6" y="540.9" width="0.9" height="2.1" fill="#8a7410"/>
<rect x="8.6" y="540.9" width="0.9" height="2.1" fill="#8a7410"/>
<rect x="10.6" y="540.9" width="0.9" height="2.1" fill="#8a7410"/>
<rect x="12.6" y="540.9" width="0.9" height="2.1" fill="#8a7410"/>
<rect x="14.6" y="540.9" width="0.9" height="2.1" fill="#8a7410"/>
<rect x="5.6" y="557.4" width="11.6" height="10.6" fill="#f7fbfd" rx="0.8" stroke="#7e97a4" stroke-width="1"/>
<path d="M4.6,556 V566.4 Q4.6,568.4 6.4,568.4" fill="none" stroke="#7e97a4" stroke-width="1"/>
<path d="M7.4,564.6 L9.8,561.8 L11.6,563.4 L14.8,560.2" fill="none" stroke="#1f6fd0" stroke-width="1.4"/>
<path d="M7.4,566.2 H15" fill="none" stroke="#1f6fd0" stroke-width="1"/>
<path d="M8.4,580.8 H17 L14.8,588.2 H6.2 Z" fill="#e9f3fb" stroke="#9fb8cc" stroke-width="0.8"/>
<rect x="8.3" y="860.6" width="10.2" height="11.8" fill="#fbfcfc" rx="1" stroke="#5c6f7a" stroke-width="1.1"/>
<rect x="10.8" y="859.2" width="5.2" height="2.4" fill="#e6eaec" rx="0.6" stroke="#7e8e97" stroke-width="0.8"/>
<path d="M10.4,870.2 L16.2,863.4" fill="none" stroke="#f5a623" stroke-width="1.9"/>
<path d="M16.2,863.4 L17,862.4" fill="none" stroke="#e8534a" stroke-width="1.9"/>
<path d="M29.6,862 V872.8" fill="none" stroke="#3d4ec2" stroke-width="1" stroke-dasharray="1.2 1"/>
<path d="M39.2,867.4 L41.4,862.2 H49.8 L52,867.4 V872 H39.2 Z M40.9,867.4 H43.2 Q43.6,869.2 45.6,869.2 Q47.6,869.2 48,867.4 H50.3 L48.9,863.7 H42.3 Z" fill="#3040b0" fill-rule="evenodd"/>
<path d="M39.2,867.4 H43.2 Q43.6,869.2 45.6,869.2 Q47.6,869.2 48,867.4 H52 V872 H39.2 Z" fill="#3040b0"/>
<path d="M65.4,863.2 Q71,857.4 76.6,863.2 Q71,869 65.4,863.2 Z" fill="#fdfdfd" stroke="#4a5a64" stroke-width="1"/>
<circle cx="71" cy="863" r="2.4" fill="#2b78d8"/>
<circle cx="71" cy="863" r="1" fill="#16324f"/>
<path d="M75.2,865 L76.3,867.5 L78.9,867.8 L76.9,869.5 L77.5,872.2 L75.2,870.8 L72.9,872.2 L73.5,869.5 L71.5,867.8 L74.1,867.5 Z" fill="#ffffff" stroke="#2196f3" stroke-width="1.1"/>
<path d="M87.7,862 V872.8" fill="none" stroke="#3d4ec2" stroke-width="1" stroke-dasharray="1.2 1"/>
<rect x="97" y="860.6" width="14" height="12.2" fill="#e4e6e8" rx="1.2"/>
<path d="M97,862 Q97,860.6 98.4,860.6 H109.6 Q111,860.6 111,862 V864.8 H97 Z" fill="#e8413c"/>
<path d="M99.6,866 V872" fill="none" stroke="#c6cacd" stroke-width="0.8"/>
<path d="M102.4,866 V872" fill="none" stroke="#c6cacd" stroke-width="0.8"/>
<path d="M105.2,866 V872" fill="none" stroke="#c6cacd" stroke-width="0.8"/>
<path d="M108,866 V872" fill="none" stroke="#c6cacd" stroke-width="0.8"/>
<path d="M98,867.4 H110 M98,870 H110" fill="none" stroke="#c6cacd" stroke-width="0.8"/>
<rect x="99.6" y="859" width="1.8" height="3.2" fill="#b9bfc4" rx="0.6"/>
<rect x="106.6" y="859" width="1.8" height="3.2" fill="#b9bfc4" rx="0.6"/>
<path d="M119.5,862 V872.8" fill="none" stroke="#3d4ec2" stroke-width="1" stroke-dasharray="1.2 1"/>
<path d="M130.6,859.2 H136.6 L139.6,862.2 V870.6 H130.6 Z" fill="#f4f7f9" stroke="#aab7c0" stroke-width="1"/>
<circle cx="139.4" cy="869" r="2.6" fill="none" stroke="#3f4d57" stroke-width="1.8"/>
<path d="M139.4,865 V873 M135.4,869 H143.4 M136.6,866.2 L142.2,871.8 M142.2,866.2 L136.6,871.8" fill="none" stroke="#3f4d57" stroke-width="1.2"/>
<circle cx="139.4" cy="869" r="1.1" fill="#f4f7f9"/>
<path d="M151.4,864.4 H158.20000000000002 L154.8,868.4 Z" fill="#3d4ec2"/>
<path d="M171.4,866 V863.6 H180" fill="none" stroke="#35a03c" stroke-width="1.7"/>
<path d="M179.2,860.6 L183,863.6 L179.2,866.6 Z" fill="#35a03c"/>
<path d="M181.6,866.4 V869 H173" fill="none" stroke="#35a03c" stroke-width="1.7"/>
<path d="M173.8,866 L170,869 L173.8,872 Z" fill="#35a03c"/>
<path d="M191.5,864.4 H198.3 L194.9,868.4 Z" fill="#3d4ec2"/>
<rect x="278.6" y="75.6" width="10.2" height="8.2" fill="#f1f2fb" stroke="#3d4ec2" stroke-width="1.1"/>
<rect x="278.6" y="75.6" width="3.6" height="8.2" fill="#3d4ec2"/>
<path d="M278.9,77.6 H282" fill="none" stroke="#d5d9f5" stroke-width="0.8"/>
<path d="M278.9,79.6 H282" fill="none" stroke="#d5d9f5" stroke-width="0.8"/>
<path d="M278.9,81.6 H282" fill="none" stroke="#d5d9f5" stroke-width="0.8"/>
<path d="M288.6,85.6 L291.6,88.6" fill="none" stroke="#4a4a55" stroke-width="1.5"/>
<circle cx="287.1" cy="83.8" r="2.8" fill="#64b5f6" stroke="#90caf9" stroke-width="0.6"/>
<path d="M445.6,78 L449.8,82 L445.6,86" fill="none" stroke="#15151a" stroke-width="1.8"/>
<g transform="translate(459.6 75.4) scale(0.475)">
<path d="M0.2,0.5 H3.2 Q4.2,0.5 4.2,1.6 V24.8" fill="none" stroke="#aebac6" stroke-width="2.2"/>
<path d="M4.9,5.9 H29 V22.4 H14.4 V19.5 H6.8 V22.4 H4.9 Z" fill="#35993a"/>
<rect x="18.7" y="9.5" width="7" height="7.4" fill="#3b4a52"/>
<rect x="5" y="11.9" width="4.4" height="4.3" fill="#c9ced8"/>
<rect x="15.9" y="19.6" width="1.2" height="2.8" fill="#f2d338"/>
<rect x="17.8" y="19.6" width="1.2" height="2.8" fill="#f2d338"/>
<rect x="19.7" y="19.6" width="1.2" height="2.8" fill="#f2d338"/>
<rect x="21.6" y="19.6" width="1.2" height="2.8" fill="#f2d338"/>
<rect x="26.1" y="19.6" width="1.7" height="2.8" fill="#f2d338"/>
<path d="M11,10.6 H17 M10.5,14.6 H17.5" fill="none" stroke="#1f6f25" stroke-width="1.3"/>
</g>
<path d="M1638.2,82.8 H1647.2" fill="none" stroke="#455a64" stroke-width="2"/>
<path d="M1641,79.6 L1637.8,82.8 L1641,86" fill="none" stroke="#455a64" stroke-width="1.7"/>
<path d="M1656.6,79.2 H1662.6 L1659.6,82.8 Z" fill="#3040a0"/>
<path d="M229.8,105 H240 L242.2,107.2 V117 H229.8 Z" fill="#2f86dd"/>
<rect x="232" y="105" width="6.6" height="3.8" fill="#a9d0f5"/>
<rect x="236.2" y="105.6" width="1.6" height="2.6" fill="#2f6fb8"/>
<rect x="231.6" y="110.6" width="8.8" height="6.4" fill="#f1f6fb"/>
<path d="M232.6,112.6 H239.4 M232.6,114.6 H239.4" fill="none" stroke="#c4d3e2" stroke-width="0.8"/>
<circle cx="322" cy="111" r="5.9" fill="#2e8b3a"/>
<path d="M318.8,111 H325.2 M322,107.8 V114.2" fill="none" stroke="#ffffff" stroke-width="2"/>
<path d="M408.2,106.4 H418 M411,106 Q411,104.4 413.1,104.4 Q415.2,104.4 415.2,106" fill="none" stroke="#e53935" stroke-width="1.5"/>
<path d="M408.8,107.6 H417.4 L416.6,117.6 H409.6 Z" fill="#ef5350"/>
<path d="M411.3,108.8 V116.4 M413.1,108.8 V116.4 M414.9,108.8 V116.4" fill="none" stroke="#fbd0cd" stroke-width="0.9"/>
<path d="M433.4,105.6 H439.4 L441.8,108 V115.4 H433.4 Z" fill="#f6f8f9" stroke="#ccd4d9" stroke-width="1"/>
<path d="M436,104.2 H441.6 L444,106.6 V113" fill="none" stroke="#d5dce0" stroke-width="1"/>
<path d="M435,109.6 H439.6 M435,111.6 H439.6" fill="none" stroke="#dde3e7" stroke-width="0.8"/>
<circle cx="442.6" cy="114" r="3.8" fill="#a9d8ac"/>
<path d="M440.6,114 H444.6 M442.6,112 V116" fill="none" stroke="#ffffff" stroke-width="1.3"/>
<path d="M454.40000000000003,109.3 H461.2 L457.8,113.3 Z" fill="#b9bfe6"/>
<path d="M486.9,107.2 A5.3,5.3 0 1 0 488.4,112.4" fill="none" stroke="#3d4ec2" stroke-width="1.9"/>
<path d="M484.2,108.9 L489.2,109.6 L489.2,104.4 Z" fill="#3d4ec2"/>
<path d="M503.5,106.8 V117.8" fill="none" stroke="#3d4ec2" stroke-width="1" stroke-dasharray="1.2 1"/>
<path d="M518.8,106.8 H529.4" fill="none" stroke="#3d4ec2" stroke-width="1.6"/>
<path d="M518.8,110.6 H529.4" fill="none" stroke="#3d4ec2" stroke-width="1.6"/>
<path d="M518.8,114.4 H529.4" fill="none" stroke="#3d4ec2" stroke-width="1.6"/>
<path d="M554,106 V116 L547.6,111 Z" fill="#3d4ec2"/>
<path d="M566.4,109.3 H573.1999999999999 L569.8,113.3 Z" fill="#3d4ec2"/>
<path d="M591.6,106 V116 L598.4,111 Z" fill="#3d4ec2"/>
<path d="M609.7,109.3 H616.5 L613.1,113.3 Z" fill="#3d4ec2"/>
<rect x="634.4" y="105" width="7.6" height="3.6" fill="#e6e6e6"/>
<rect x="632" y="108" width="12.4" height="6.4" fill="#cfcfcf" rx="1.4"/>
<rect x="634.6" y="112" width="7.2" height="4.8" fill="#f0f0f0" stroke="#d6d6d6" stroke-width="0.7"/>
<path d="M635.8,113.8 H640.6 M635.8,115.2 H640.6" fill="none" stroke="#d0d0d0" stroke-width="0.6"/>
<path d="M667.7,113.5 L672.4,108.7" fill="none" stroke="#4b59c6" stroke-width="5.4" stroke-linecap="round"/>
<path d="M667.9,113.3 L672.2,108.9" fill="none" stroke="#9aa3e2" stroke-width="2.6" stroke-linecap="round"/>
<path d="M668.4,112.8 L671.4,109.7" fill="none" stroke="#4b59c6" stroke-width="1.0" stroke-linecap="round"/>
<path d="M690.5,106.8 V117.8" fill="none" stroke="#3d4ec2" stroke-width="1" stroke-dasharray="1.2 1"/>
<path d="M707.6,110 V107.6 Q707.6,104.6 711.2,104.6 Q714.8,104.6 714.8,107.6 V110" fill="none" stroke="#bccbd4" stroke-width="1.7"/>
<rect x="705.3" y="109.4" width="11.9" height="8.4" fill="#f8ecae" rx="0.8"/>
<circle cx="711.2" cy="112.4" r="1" fill="#b9c6cf"/>
<rect x="710.7" y="112.6" width="1" height="2.8" fill="#b9c6cf"/>
<path d="M726.5,109.3 H733.3 L729.9,113.3 Z" fill="#b9bfe6"/>
<path d="M749.8,105 Q749.8,104 750.8,104 H755.8 Q756.8,104 756.8,105 V115 L753.3,112.6 L749.8,115 Z" fill="#2196f3"/>
<circle cx="758.2" cy="114" r="4" fill="#2e8b3a" stroke="#ffffff" stroke-width="0.6"/>
<path d="M756,114 H760.4 M758.2,111.8 V116.2" fill="none" stroke="#ffffff" stroke-width="1.4"/>
<path d="M781.9,106.2 L783.6,109.9 L787.6,110.3 L784.6,113 L785.5,117 L781.9,114.9 L778.3,117 L779.2,113 L776.2,110.3 L780.2,109.9 Z" fill="none" stroke="#2196f3" stroke-width="1.4" stroke-linejoin="round"/>
<circle cx="1658" cy="110.8" r="6" fill="#2196f3"/>
<rect x="1657.2" y="110" width="1.6" height="3.6" fill="#e6f2fd"/>
<circle cx="1658" cy="108" r="0.9" fill="#e6f2fd"/>
<g transform="translate(225 138) scale(1.0)">
<path d="M0.2,0.5 H3.2 Q4.2,0.5 4.2,1.6 V24.8" fill="none" stroke="#aebac6" stroke-width="1.7"/>
<path d="M4.9,5.9 H29 V22.4 H14.4 V19.5 H6.8 V22.4 H4.9 Z" fill="#35993a"/>
<rect x="18.7" y="9.5" width="7" height="7.4" fill="#3b4a52"/>
<rect x="5" y="11.9" width="4.4" height="4.3" fill="#c9ced8"/>
<rect x="15.9" y="19.6" width="1.2" height="2.8" fill="#f2d338"/>
<rect x="17.8" y="19.6" width="1.2" height="2.8" fill="#f2d338"/>
<rect x="19.7" y="19.6" width="1.2" height="2.8" fill="#f2d338"/>
<rect x="21.6" y="19.6" width="1.2" height="2.8" fill="#f2d338"/>
<rect x="26.1" y="19.6" width="1.7" height="2.8" fill="#f2d338"/>
<path d="M11,10.6 H17 M10.5,14.6 H17.5" fill="none" stroke="#1f6f25" stroke-width="1.3"/>
</g>
<g transform="translate(257.4 242.2) scale(0.545)">
<path d="M0.2,0.5 H3.2 Q4.2,0.5 4.2,1.6 V24.8" fill="none" stroke="#aebac6" stroke-width="2.2"/>
<path d="M4.9,5.9 H29 V22.4 H14.4 V19.5 H6.8 V22.4 H4.9 Z" fill="#4cae50"/>
<rect x="18.7" y="9.5" width="7" height="7.4" fill="#3b4a52"/>
<rect x="5" y="11.9" width="4.4" height="4.3" fill="#c9ced8"/>
<rect x="15.9" y="19.6" width="1.2" height="2.8" fill="#f2d338"/>
<rect x="17.8" y="19.6" width="1.2" height="2.8" fill="#f2d338"/>
<rect x="19.7" y="19.6" width="1.2" height="2.8" fill="#f2d338"/>
<rect x="21.6" y="19.6" width="1.2" height="2.8" fill="#f2d338"/>
<rect x="26.1" y="19.6" width="1.7" height="2.8" fill="#f2d338"/>
<path d="M11,10.6 H17 M10.5,14.6 H17.5" fill="none" stroke="#1f6f25" stroke-width="1.3"/>
</g>
<g transform="translate(958.8 242.1) scale(0.456)">
<path d="M0.2,0.5 H3.2 Q4.2,0.5 4.2,1.6 V24.8" fill="none" stroke="#aebac6" stroke-width="2.2"/>
<path d="M4.9,5.9 H29 V22.4 H14.4 V19.5 H6.8 V22.4 H4.9 Z" fill="#4cae50"/>
<rect x="18.7" y="9.5" width="7" height="7.4" fill="#3b4a52"/>
<rect x="5" y="11.9" width="4.4" height="4.3" fill="#c9ced8"/>
<rect x="15.9" y="19.6" width="1.2" height="2.8" fill="#f2d338"/>
<rect x="17.8" y="19.6" width="1.2" height="2.8" fill="#f2d338"/>
<rect x="19.7" y="19.6" width="1.2" height="2.8" fill="#f2d338"/>
<rect x="21.6" y="19.6" width="1.2" height="2.8" fill="#f2d338"/>
<rect x="26.1" y="19.6" width="1.7" height="2.8" fill="#f2d338"/>
<path d="M11,10.6 H17 M10.5,14.6 H17.5" fill="none" stroke="#1f6f25" stroke-width="1.3"/>
</g>
<path d="M965.99,253.14 Q970.29,248.34 974.59,253.14 Q970.29,257.94 965.99,253.14 Z" fill="#ffffff" stroke="#3d484e" stroke-width="0.9"/>
<circle cx="970.29" cy="253.14" r="1.7" fill="#2e9e35"/>
<circle cx="970.29" cy="253.14" r="0.8" fill="#10240f"/>
<path d="M899.4,253 L904.4,248 L909.4,253" fill="none" stroke="#444" stroke-width="1.6"/>
<path d="M1601.4,253 L1606.4,248 L1611.4,253" fill="none" stroke="#444" stroke-width="1.6"/>
<path d="M1673.3,385.6 L1669.9,388.6 L1673.3,391.6" fill="none" stroke="#2f3fa2" stroke-width="1.5"/>
<path d="M1673.2,748.9 L1669.8,751.8 L1673.2,754.7" fill="none" stroke="#2f3fa2" stroke-width="1.5"/>
<defs><clipPath id="cardclip"><rect x="226" y="184" width="1433" height="407"/></clipPath><filter id="sh" x="-20%" y="-20%" width="140%" height="140%"><feGaussianBlur stdDeviation="1"/></filter></defs>
<g clip-path="url(#cardclip)">
<circle cx="1655" cy="552.2" r="18.2" fill="#dedede" filter="url(#sh)"/>
<circle cx="1655" cy="551.5" r="18.2" fill="#fdfdfd"/>
<path d="M1653.2,548 V546.6 Q1653.2,543.6 1656.4,543.6 Q1659.6,543.6 1659.6,546.6" fill="none" stroke="#5a5a5a" stroke-width="1.2"/>
<rect x="1651.2" y="548" width="10.6" height="9.4" fill="none" rx="0.8" stroke="#5a5a5a" stroke-width="1.2"/>
<circle cx="1656.4" cy="553.2" r="0.9" fill="#5a5a5a"/>
</g>
<path d="M934,601.4 L937,604.6 L940,601.4" fill="none" stroke="#9c9c9c" stroke-width="1.3"/>
<path d="M954.8,604.6 L957.8,601.4 L960.8,604.6" fill="none" stroke="#9c9c9c" stroke-width="1.3"/>
<path d="M228.2,616.4 H235 L238.2,619.6 V630.4 H228.2 Z" fill="#f7f9fa" stroke="#8fa0a9" stroke-width="1"/>
<path d="M235,616.4 V619.6 H238.2" fill="none" stroke="#8fa0a9" stroke-width="0.8"/>
<path d="M337.7,621.1 L342.7,626.1 M342.7,621.1 L337.7,626.1" fill="none" stroke="#33409c" stroke-width="1.8"/>
<g transform="translate(365.4 616.9) scale(0.44)">
<path d="M0.2,0.5 H3.2 Q4.2,0.5 4.2,1.6 V24.8" fill="none" stroke="#aebac6" stroke-width="2.2"/>
<path d="M4.9,5.9 H29 V22.4 H14.4 V19.5 H6.8 V22.4 H4.9 Z" fill="#35993a"/>
<rect x="18.7" y="9.5" width="7" height="7.4" fill="#3b4a52"/>
<rect x="5" y="11.9" width="4.4" height="4.3" fill="#c9ced8"/>
<rect x="15.9" y="19.6" width="1.2" height="2.8" fill="#f2d338"/>
<rect x="17.8" y="19.6" width="1.2" height="2.8" fill="#f2d338"/>
<rect x="19.7" y="19.6" width="1.2" height="2.8" fill="#f2d338"/>
<rect x="21.6" y="19.6" width="1.2" height="2.8" fill="#f2d338"/>
<rect x="26.1" y="19.6" width="1.7" height="2.8" fill="#f2d338"/>
<path d="M11,10.6 H17 M10.5,14.6 H17.5" fill="none" stroke="#1f6f25" stroke-width="1.3"/>
</g>
<path d="M372.19,627.55 Q376.49,622.75 380.79,627.55 Q376.49,632.35 372.19,627.55 Z" fill="#ffffff" stroke="#3d484e" stroke-width="0.9"/>
<circle cx="376.49" cy="627.55" r="1.7" fill="#2e9e35"/>
<circle cx="376.49" cy="627.55" r="0.8" fill="#10240f"/>
<path d="M547.7,621.1 L552.7,626.1 M552.7,621.1 L547.7,626.1" fill="none" stroke="#33409c" stroke-width="1.8"/>
<rect x="581" y="619.2" width="2.2" height="2.2" fill="#3d4ec2" rx="0.6"/>
<rect x="581" y="622.8" width="2.2" height="2.2" fill="#3d4ec2" rx="0.6"/>
<rect x="581" y="626.4" width="2.2" height="2.2" fill="#3d4ec2" rx="0.6"/>
<rect x="229.4" y="650" width="11.4" height="11" fill="#eef6fd" stroke="#9dcbf2" stroke-width="0.9"/>
<path d="M229.4,653.6 H240.8 M229.4,657.4 H240.8 M233.2,650 V661 M237,650 V661" fill="none" stroke="#9dcbf2" stroke-width="0.9"/>
<rect x="229" y="653.2" width="12.2" height="2.4" fill="#3c9a3f"/>
<circle cx="239.6" cy="659.6" r="4.2" fill="#2c8a33" stroke="#ffffff" stroke-width="0.6"/>
<path d="M237.2,659.6 H242 M239.6,657.2 V662" fill="none" stroke="#ffffff" stroke-width="1.5"/>
<path d="M251.5,654.4 H258.3 L254.9,658.4 Z" fill="#3d4ec2"/>
<path d="M274,653 H283.4 M281,650.6 L284.2,653 L281,655.4" fill="none" stroke="#a8d5a5" stroke-width="1.6"/>
<path d="M285.4,658.6 H276 M278.4,656.2 L275.2,658.6 L278.4,661" fill="none" stroke="#a8d5a5" stroke-width="1.6"/>
<path d="M279.6,663.4 L286.4,656.4" fill="none" stroke="#f6d9a0" stroke-width="1.8"/>
<rect x="300.40000000000003" y="650.8000000000001" width="10.2" height="8.2" fill="#f1f2fb" stroke="#3d4ec2" stroke-width="1.1"/>
<rect x="300.40000000000003" y="650.8000000000001" width="3.6" height="8.2" fill="#3d4ec2"/>
<path d="M300.7,652.8000000000001 H303.8" fill="none" stroke="#d5d9f5" stroke-width="0.8"/>
<path d="M300.7,654.8000000000001 H303.8" fill="none" stroke="#d5d9f5" stroke-width="0.8"/>
<path d="M300.7,656.8000000000001 H303.8" fill="none" stroke="#d5d9f5" stroke-width="0.8"/>
<path d="M310.40000000000003,660.8000000000001 L313.40000000000003,663.8000000000001" fill="none" stroke="#4a4a55" stroke-width="1.5"/>
<circle cx="308.90000000000003" cy="659.0" r="2.8" fill="#64b5f6" stroke="#90caf9" stroke-width="0.6"/>
<path d="M327.6,652 V662.8" fill="none" stroke="#3d4ec2" stroke-width="1" stroke-dasharray="1.2 1"/>
<path d="M342.6,652.8 H353.4" fill="none" stroke="#3d4ec2" stroke-width="1.6"/>
<path d="M342.6,656.6 H353.4" fill="none" stroke="#3d4ec2" stroke-width="1.6"/>
<path d="M342.6,660.4 H353.4" fill="none" stroke="#3d4ec2" stroke-width="1.6"/>
<path d="M368.7,652 V662.8" fill="none" stroke="#3d4ec2" stroke-width="1" stroke-dasharray="1.2 1"/>
<rect x="386.2" y="650.4" width="9.4" height="8.6" fill="#eaf4fd" stroke="#a5d0f5" stroke-width="0.9"/>
<path d="M386.2,653.2 H395.6 M386.2,656 H395.6 M389.4,650.4 V659 M392.6,650.4 V659" fill="none" stroke="#a5d0f5" stroke-width="0.8"/>
<rect x="382.4" y="654.2" width="9.4" height="8.6" fill="#f6fbf6" stroke="#3c9a3f" stroke-width="1.1"/>
<path d="M382.4,657 H391.8 M382.4,659.8 H391.8 M385.6,654.2 V662.8 M388.8,654.2 V662.8" fill="none" stroke="#5aae5c" stroke-width="0.9"/>
<path d="M404.40000000000003,654.4 H411.2 L407.8,658.4 Z" fill="#3d4ec2"/>
<rect x="426.4" y="651.6" width="3.8" height="3.8" fill="#dfe3fa" stroke="#3d4ec2" stroke-width="1"/>
<rect x="426.4" y="657.2" width="3.8" height="3.8" fill="#ffffff" stroke="#3d4ec2" stroke-width="1"/>
<path d="M432.4,653.4 H439 M432.4,659.2 H439" fill="none" stroke="#3d4ec2" stroke-width="1.5"/>
<path d="M447.8,654.4 H454.59999999999997 L451.2,658.4 Z" fill="#3d4ec2"/>
<path d="M469.5,652 V662.8" fill="none" stroke="#3d4ec2" stroke-width="1" stroke-dasharray="1.2 1"/>
<path d="M662.8000000000001,654.7 H669.4 L666.1,658.3 Z" fill="#b9bfe6"/>
<path d="M813.4,658.6 L808.4,663.6" fill="none" stroke="#3a4650" stroke-width="1.7" stroke-linecap="round"/>
<circle cx="814.9" cy="656.3" r="4.7" fill="#55a8ea" stroke="#7dbef0" stroke-width="0.8"/>
<rect x="1597.4" y="649.6" width="8.6" height="11.2" fill="#eaf4fd" stroke="#b5d8f5" stroke-width="0.8"/>
<path d="M1597.4,652.4 H1606 M1597.4,655.2 H1606 M1597.4,658 H1606" fill="none" stroke="#b5d8f5" stroke-width="0.8"/>
<rect x="1597.6" y="649.8" width="3.6" height="10.8" fill="none" stroke="#2e8b3a" stroke-width="1.4"/>
<path d="M1604.4,657.6 L1609.4,663" fill="none" stroke="#f9a825" stroke-width="2.4" stroke-linecap="round"/>
<path d="M1600.6,663.4 L1606.8,656.6" fill="none" stroke="#546e7a" stroke-width="1.6"/>
<path d="M1606,656 Q1606.4,653.6 1609,654.2 L1607.6,655.8 L1608.6,656.8 L1610,655.4 Q1610.4,658 1607.8,658" fill="#546e7a"/>
<path d="M1617.6,654.5 H1624.0 L1620.8,658.3 Z" fill="#2f3fa0"/>
<path d="M1639.6,656.5 H1645" fill="none" stroke="#cfd8dc" stroke-width="1.8"/>
<path d="M1645,653.4 Q1647,653.4 1647,656.5 Q1647,659.6 1645,659.6 Z" fill="#2196f3"/>
<path d="M1646.4,655 H1651.4 Q1652,653.4 1653,653.4 V659.6 Q1652,659.6 1651.4,658 H1646.4 Z" fill="#2f8ae8"/>
<g transform="translate(226.2 719.5) scale(0.43)">
<path d="M0.2,0.5 H3.2 Q4.2,0.5 4.2,1.6 V24.8" fill="none" stroke="#aebac6" stroke-width="2.2"/>
<path d="M4.9,5.9 H29 V22.4 H14.4 V19.5 H6.8 V22.4 H4.9 Z" fill="#35993a"/>
<rect x="18.7" y="9.5" width="7" height="7.4" fill="#3b4a52"/>
<rect x="5" y="11.9" width="4.4" height="4.3" fill="#c9ced8"/>
<rect x="15.9" y="19.6" width="1.2" height="2.8" fill="#f2d338"/>
<rect x="17.8" y="19.6" width="1.2" height="2.8" fill="#f2d338"/>
<rect x="19.7" y="19.6" width="1.2" height="2.8" fill="#f2d338"/>
<rect x="21.6" y="19.6" width="1.2" height="2.8" fill="#f2d338"/>
<rect x="26.1" y="19.6" width="1.7" height="2.8" fill="#f2d338"/>
<path d="M11,10.6 H17 M10.5,14.6 H17.5" fill="none" stroke="#1f6f25" stroke-width="1.3"/>
</g>
<path d="M232.74,729.91 Q237.04,725.11 241.34,729.91 Q237.04,734.71 232.74,729.91 Z" fill="#ffffff" stroke="#3d484e" stroke-width="0.9"/>
<circle cx="237.04" cy="729.91" r="1.7" fill="#2e9e35"/>
<circle cx="237.04" cy="729.91" r="0.8" fill="#10240f"/>
<path d="M246.8,724.5 H253.0 L249.9,728.0999999999999 Z" fill="#2c46ae"/>
<g transform="translate(226.2 744.5) scale(0.43)">
<path d="M0.2,0.5 H3.2 Q4.2,0.5 4.2,1.6 V24.8" fill="none" stroke="#aebac6" stroke-width="2.2"/>
<path d="M4.9,5.9 H29 V22.4 H14.4 V19.5 H6.8 V22.4 H4.9 Z" fill="#35993a"/>
<rect x="18.7" y="9.5" width="7" height="7.4" fill="#3b4a52"/>
<rect x="5" y="11.9" width="4.4" height="4.3" fill="#c9ced8"/>
<rect x="15.9" y="19.6" width="1.2" height="2.8" fill="#f2d338"/>
<rect x="17.8" y="19.6" width="1.2" height="2.8" fill="#f2d338"/>
<rect x="19.7" y="19.6" width="1.2" height="2.8" fill="#f2d338"/>
<rect x="21.6" y="19.6" width="1.2" height="2.8" fill="#f2d338"/>
<rect x="26.1" y="19.6" width="1.7" height="2.8" fill="#f2d338"/>
<path d="M11,10.6 H17 M10.5,14.6 H17.5" fill="none" stroke="#1f6f25" stroke-width="1.3"/>
</g>
<path d="M232.74,754.91 Q237.04,750.11 241.34,754.91 Q237.04,759.71 232.74,754.91 Z" fill="#ffffff" stroke="#3d484e" stroke-width="0.9"/>
<circle cx="237.04" cy="754.91" r="1.7" fill="#2e9e35"/>
<circle cx="237.04" cy="754.91" r="0.8" fill="#10240f"/>
<path d="M246.8,749.5 H253.0 L249.9,753.0999999999999 Z" fill="#2c46ae"/>
<g transform="translate(226.2 769.5) scale(0.43)">
<path d="M0.2,0.5 H3.2 Q4.2,0.5 4.2,1.6 V24.8" fill="none" stroke="#aebac6" stroke-width="2.2"/>
<path d="M4.9,5.9 H29 V22.4 H14.4 V19.5 H6.8 V22.4 H4.9 Z" fill="#35993a"/>
<rect x="18.7" y="9.5" width="7" height="7.4" fill="#3b4a52"/>
<rect x="5" y="11.9" width="4.4" height="4.3" fill="#c9ced8"/>
<rect x="15.9" y="19.6" width="1.2" height="2.8" fill="#f2d338"/>
<rect x="17.8" y="19.6" width="1.2" height="2.8" fill="#f2d338"/>
<rect x="19.7" y="19.6" width="1.2" height="2.8" fill="#f2d338"/>
<rect x="21.6" y="19.6" width="1.2" height="2.8" fill="#f2d338"/>
<rect x="26.1" y="19.6" width="1.7" height="2.8" fill="#f2d338"/>
<path d="M11,10.6 H17 M10.5,14.6 H17.5" fill="none" stroke="#1f6f25" stroke-width="1.3"/>
</g>
<path d="M232.74,779.91 Q237.04,775.11 241.34,779.91 Q237.04,784.71 232.74,779.91 Z" fill="#ffffff" stroke="#3d484e" stroke-width="0.9"/>
<circle cx="237.04" cy="779.91" r="1.7" fill="#2e9e35"/>
<circle cx="237.04" cy="779.91" r="0.8" fill="#10240f"/>
<path d="M246.8,774.5 H253.0 L249.9,778.0999999999999 Z" fill="#2c46ae"/>
<g transform="translate(226.2 794.5) scale(0.43)">
<path d="M0.2,0.5 H3.2 Q4.2,0.5 4.2,1.6 V24.8" fill="none" stroke="#aebac6" stroke-width="2.2"/>
<path d="M4.9,5.9 H29 V22.4 H14.4 V19.5 H6.8 V22.4 H4.9 Z" fill="#35993a"/>
<rect x="18.7" y="9.5" width="7" height="7.4" fill="#3b4a52"/>
<rect x="5" y="11.9" width="4.4" height="4.3" fill="#c9ced8"/>
<rect x="15.9" y="19.6" width="1.2" height="2.8" fill="#f2d338"/>
<rect x="17.8" y="19.6" width="1.2" height="2.8" fill="#f2d338"/>
<rect x="19.7" y="19.6" width="1.2" height="2.8" fill="#f2d338"/>
<rect x="21.6" y="19.6" width="1.2" height="2.8" fill="#f2d338"/>
<rect x="26.1" y="19.6" width="1.7" height="2.8" fill="#f2d338"/>
<path d="M11,10.6 H17 M10.5,14.6 H17.5" fill="none" stroke="#1f6f25" stroke-width="1.3"/>
</g>
<path d="M232.74,804.91 Q237.04,800.11 241.34,804.91 Q237.04,809.71 232.74,804.91 Z" fill="#ffffff" stroke="#3d484e" stroke-width="0.9"/>
<circle cx="237.04" cy="804.91" r="1.7" fill="#2e9e35"/>
<circle cx="237.04" cy="804.91" r="0.8" fill="#10240f"/>
<path d="M246.8,799.5 H253.0 L249.9,803.0999999999999 Z" fill="#2c46ae"/>
<g transform="translate(226.2 819.5) scale(0.43)">
<path d="M0.2,0.5 H3.2 Q4.2,0.5 4.2,1.6 V24.8" fill="none" stroke="#aebac6" stroke-width="2.2"/>
<path d="M4.9,5.9 H29 V22.4 H14.4 V19.5 H6.8 V22.4 H4.9 Z" fill="#35993a"/>
<rect x="18.7" y="9.5" width="7" height="7.4" fill="#3b4a52"/>
<rect x="5" y="11.9" width="4.4" height="4.3" fill="#c9ced8"/>
<rect x="15.9" y="19.6" width="1.2" height="2.8" fill="#f2d338"/>
<rect x="17.8" y="19.6" width="1.2" height="2.8" fill="#f2d338"/>
<rect x="19.7" y="19.6" width="1.2" height="2.8" fill="#f2d338"/>
<rect x="21.6" y="19.6" width="1.2" height="2.8" fill="#f2d338"/>
<rect x="26.1" y="19.6" width="1.7" height="2.8" fill="#f2d338"/>
<path d="M11,10.6 H17 M10.5,14.6 H17.5" fill="none" stroke="#1f6f25" stroke-width="1.3"/>
</g>
<path d="M232.74,829.91 Q237.04,825.11 241.34,829.91 Q237.04,834.71 232.74,829.91 Z" fill="#ffffff" stroke="#3d484e" stroke-width="0.9"/>
<circle cx="237.04" cy="829.91" r="1.7" fill="#2e9e35"/>
<circle cx="237.04" cy="829.91" r="0.8" fill="#10240f"/>
<path d="M246.8,824.5 H253.0 L249.9,828.0999999999999 Z" fill="#2c46ae"/>
<g transform="translate(226.2 844.5) scale(0.43)">
<path d="M0.2,0.5 H3.2 Q4.2,0.5 4.2,1.6 V24.8" fill="none" stroke="#aebac6" stroke-width="2.2"/>
<path d="M4.9,5.9 H29 V22.4 H14.4 V19.5 H6.8 V22.4 H4.9 Z" fill="#35993a"/>
<rect x="18.7" y="9.5" width="7" height="7.4" fill="#3b4a52"/>
<rect x="5" y="11.9" width="4.4" height="4.3" fill="#c9ced8"/>
<rect x="15.9" y="19.6" width="1.2" height="2.8" fill="#f2d338"/>
<rect x="17.8" y="19.6" width="1.2" height="2.8" fill="#f2d338"/>
<rect x="19.7" y="19.6" width="1.2" height="2.8" fill="#f2d338"/>
<rect x="21.6" y="19.6" width="1.2" height="2.8" fill="#f2d338"/>
<rect x="26.1" y="19.6" width="1.7" height="2.8" fill="#f2d338"/>
<path d="M11,10.6 H17 M10.5,14.6 H17.5" fill="none" stroke="#1f6f25" stroke-width="1.3"/>
</g>
<path d="M232.74,854.91 Q237.04,850.11 241.34,854.91 Q237.04,859.71 232.74,854.91 Z" fill="#ffffff" stroke="#3d484e" stroke-width="0.9"/>
<circle cx="237.04" cy="854.91" r="1.7" fill="#2e9e35"/>
<circle cx="237.04" cy="854.91" r="0.8" fill="#10240f"/>
<path d="M246.8,849.5 H253.0 L249.9,853.0999999999999 Z" fill="#2c46ae"/>
<path d="M233,876.4 V882.4" fill="none" stroke="#c5cbe8" stroke-width="1.2"/>
<path d="M239.4,876.4 V882.4 L234.2,879.4 Z" fill="#c5cbe8"/>
<path d="M268.4,876.4 V882.4 L262.8,879.4 Z" fill="#c5cbe8"/>
<path d="M514.6,876.4 V882.4 L520.4,879.4 Z" fill="#2f3fa0"/>
<path d="M549.4,876.4 V882.4" fill="none" stroke="#2f3fa0" stroke-width="1.2"/>
<path d="M542.8,876.4 V882.4 L548,879.4 Z" fill="#2f3fa0"/>
</svg>
</body></html>
